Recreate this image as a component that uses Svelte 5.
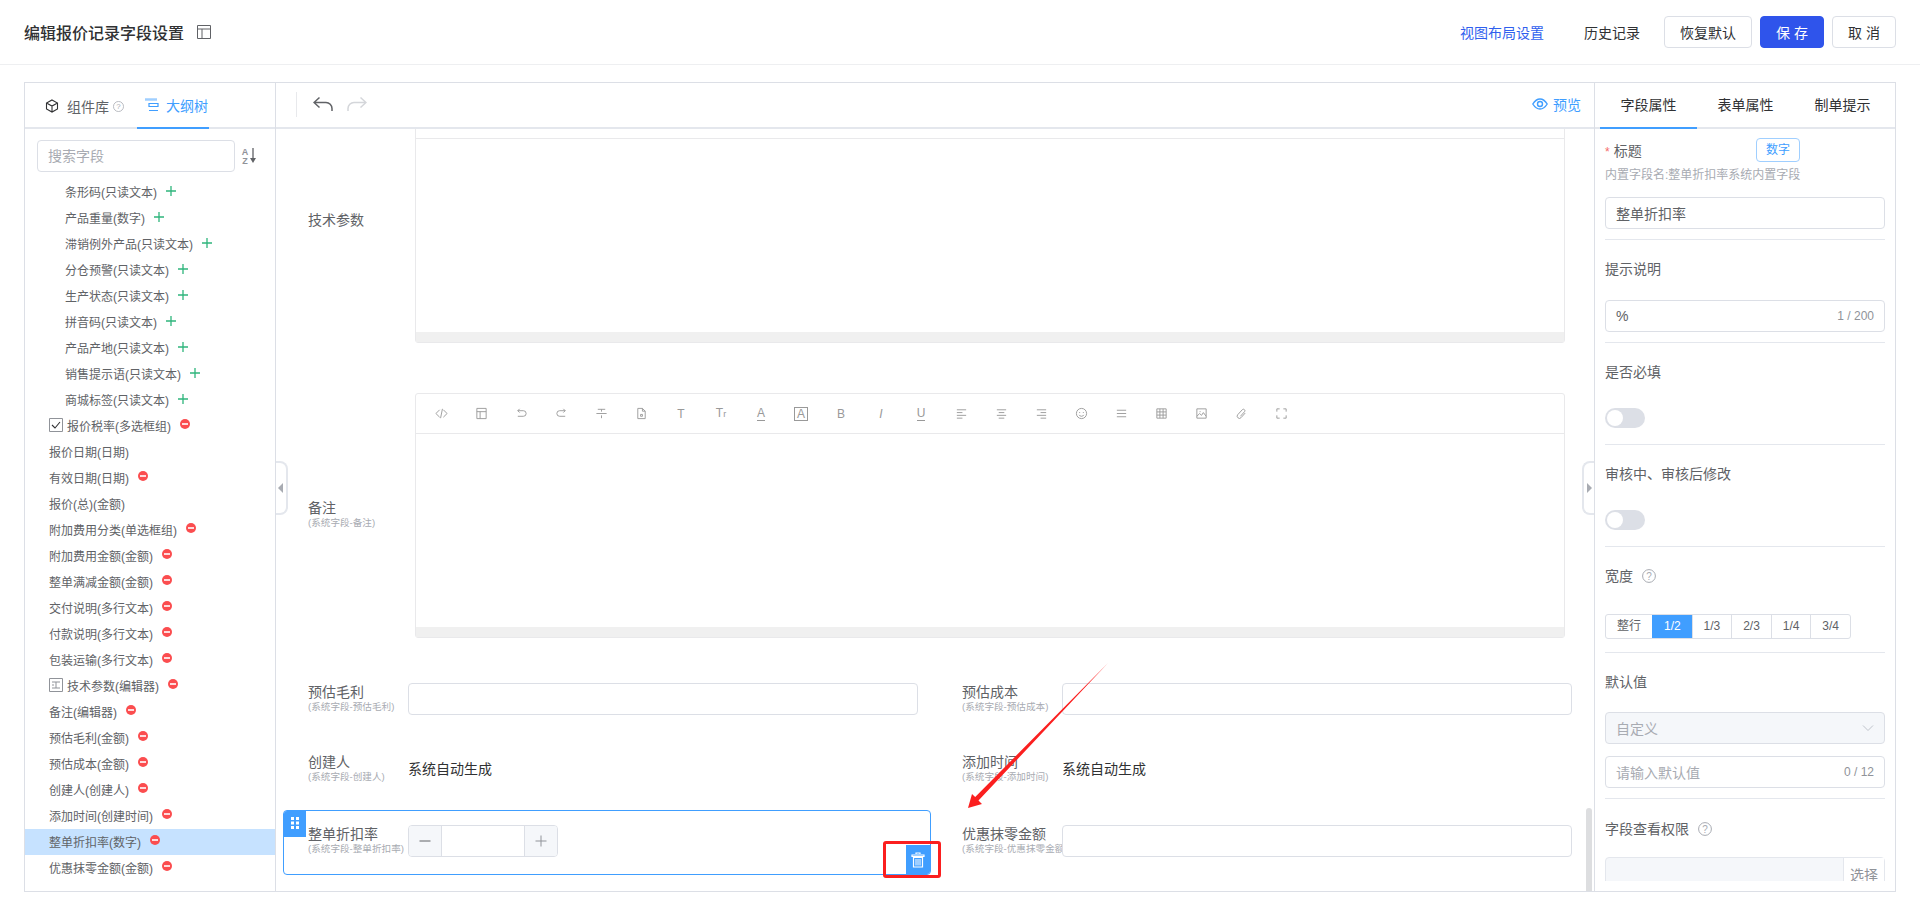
<script>
  const fields = [
    { name: '条形码(只读文本)', sub: true, mark: 'plus' },
    { name: '产品重量(数字)', sub: true, mark: 'plus' },
    { name: '滞销例外产品(只读文本)', sub: true, mark: 'plus' },
    { name: '分仓预警(只读文本)', sub: true, mark: 'plus' },
    { name: '生产状态(只读文本)', sub: true, mark: 'plus' },
    { name: '拼音码(只读文本)', sub: true, mark: 'plus' },
    { name: '产品产地(只读文本)', sub: true, mark: 'plus' },
    { name: '销售提示语(只读文本)', sub: true, mark: 'plus' },
    { name: '商城标签(只读文本)', sub: true, mark: 'plus' },
    { name: '报价税率(多选框组)', lead: 'check', mark: 'minus' },
    { name: '报价日期(日期)' },
    { name: '有效日期(日期)', mark: 'minus' },
    { name: '报价(总)(金额)' },
    { name: '附加费用分类(单选框组)', mark: 'minus' },
    { name: '附加费用金额(金额)', mark: 'minus' },
    { name: '整单满减金额(金额)', mark: 'minus' },
    { name: '交付说明(多行文本)', mark: 'minus' },
    { name: '付款说明(多行文本)', mark: 'minus' },
    { name: '包装运输(多行文本)', mark: 'minus' },
    { name: '技术参数(编辑器)', lead: 'editor', mark: 'minus' },
    { name: '备注(编辑器)', mark: 'minus' },
    { name: '预估毛利(金额)', mark: 'minus' },
    { name: '预估成本(金额)', mark: 'minus' },
    { name: '创建人(创建人)', mark: 'minus' },
    { name: '添加时间(创建时间)', mark: 'minus' },
    { name: '整单折扣率(数字)', mark: 'minus', active: true },
    { name: '优惠抹零金额(金额)', mark: 'minus' }
  ];

  const tools = [
    { d: 'M5 3 1 7l4 4M9 3l4 4-4 4M8 2 6 12' },
    { d: 'M2 1.5h10v11H2zM2 5h10M5.5 5v7.5' },
    { d: 'M3 4h6a3 3 0 0 1 0 6H3M5 2 3 4l2 2' },
    { d: 'M11 4H5a3 3 0 0 0 0 6h6M9 2l2 2-2 2' },
    { d: 'M3 2.5h8M7 2.5V5M1.5 7h11M7 9v3' },
    { d: 'M3 1.5h5l3 3v8H3zM8 1.5v3h3M6 8h2v2H6z' },
    { t: 'T' },
    { t: 'T', small: 'r' },
    { t: 'A', cls: 'under' },
    { t: 'A', cls: 'boxed' },
    { t: 'B' },
    { t: 'I', cls: 'ital' },
    { t: 'U', cls: 'under' },
    { d: 'M2 3h10M2 6h6M2 9h10M2 12h6' },
    { d: 'M2 3h10M4 6h6M2 9h10M4 12h6' },
    { d: 'M2 3h10M6 6h6M2 9h10M6 12h6' },
    { d: 'M7 1.5a5.5 5.5 0 1 0 0 11 5.5 5.5 0 0 0 0-11zM5 5.5v1M9 5.5v1M4.5 8.5c1 2 4 2 5 0' },
    { d: 'M2 3.5h10M2 7h10M2 10.5h10' },
    { d: 'M2 2h10v10H2zM2 5.3h10M2 8.7h10M5.3 2v10M8.7 2v10' },
    { d: 'M2 2h10v10H2zM2 10l3-3 2 2 2-3 3 4M5 5h1' },
    { d: 'M11 6.5 6.5 11.5a2.4 2.4 0 0 1-3.5-3.3l5-5.4a1.6 1.6 0 0 1 2.3 2.2L5.800 10' },
    { d: 'M2 5V2h3M9 2h3v3M12 9v3H9M5 12H2V9' }
  ];

  const widths = ['整行', '1/2', '1/3', '2/3', '1/4', '3/4'];
</script>

{#snippet help()}
  <svg class="help" viewBox="0 0 14 14" width="14" height="14">
    <circle cx="7" cy="7" r="6.400" fill="none" stroke="#a8abb2" />
    <text x="7" y="10.500" text-anchor="middle" font-size="10" fill="#a8abb2">?</text>
  </svg>
{/snippet}

{#snippet editor(list)}
  <div class="editor">
    <div class="editor-tools">
      {#each list as tool}
        <span class="tool">
          {#if tool.d}
            <svg viewBox="0 0 14 14" width="13" height="13"><path d={tool.d} /></svg>
          {:else}
            <span class={tool.cls}>{tool.t}{#if tool.small}<small>{tool.small}</small>{/if}</span>
          {/if}
        </span>
      {/each}
    </div>
    <div class="editor-body"></div>
    <div class="editor-foot"></div>
  </div>
{/snippet}

<div class="page">
  <header class="top">
    <h1>编辑报价记录字段设置</h1>
    <svg class="layout-ic" viewBox="0 0 14 14" width="14" height="14">
      <path d="M.5.5h13v13H.5zM.5 4h13M5 4v9.500" fill="none" stroke="#606266" />
    </svg>
    <div class="top-actions">
      <a class="link" href="#top">视图布局设置</a>
      <span class="history">历史记录</span>
      <button class="btn wide">恢复默认</button>
      <button class="btn primary">保 存</button>
      <button class="btn">取 消</button>
    </div>
  </header>

  <main class="panel">
    <aside class="outline">
      <div class="tabs left-tabs">
        <div class="tab-lib">
          <svg viewBox="0 0 14 14" width="14" height="14">
            <path d="M7 1 12.500 4v6L7 13 1.500 10V4zM1.500 4 7 7l5.500-3M7 7v6" fill="none" stroke="#303133" stroke-width="1.100" />
          </svg>
          <span>组件库</span>
          {@render help()}
        </div>
        <div class="tab-tree">
          <svg viewBox="0 0 14 14" width="14" height="14">
            <path d="M0 1.500h12" stroke="#a0cfff" stroke-width="2.500" fill="none" />
            <path d="M4 5.500h9v3H4zM4 12.500h9" stroke="#409eff" stroke-width="1.200" fill="none" />
          </svg>
          <span>大纲树</span>
        </div>
      </div>
      <div class="search-row">
        <div class="search">搜索字段</div>
        <svg class="sort" viewBox="0 0 16 18" width="16" height="18">
          <text x="4" y="8" font-size="9" font-weight="700" text-anchor="middle" fill="#909399">A</text>
          <text x="4" y="16.500" font-size="9" font-weight="700" text-anchor="middle" fill="#909399">Z</text>
          <path d="M12 1v11" stroke="#606266" stroke-width="1.300" />
          <path d="M9 11h6l-3 5z" fill="#606266" />
        </svg>
      </div>
      <ul class="tree">
        {#each fields as f}
          <li class:sub={f.sub} class:active={f.active}>
            {#if f.lead === 'check'}
              <svg class="lead" viewBox="0 0 14 14" width="14" height="14">
                <path d="M.5.5h13v13H.5z" fill="#fff" stroke="#909399" />
                <path d="M3 7l3 3 5-6" fill="none" stroke="#303133" stroke-width="1.100" />
              </svg>
            {:else if f.lead === 'editor'}
              <svg class="lead" viewBox="0 0 14 14" width="14" height="14">
                <path d="M.5.5h13v13H.5zM3 4h8M7 4v6M3 7h2M3 10h8" fill="none" stroke="#909399" />
              </svg>
            {/if}
            <span>{f.name}</span>
            {#if f.mark === 'plus'}
              <svg class="plus" viewBox="0 0 10 10" width="10" height="10">
                <path d="M5 0v10M0 5h10" stroke="#2fb57c" stroke-width="1.300" />
              </svg>
            {:else if f.mark === 'minus'}
              <svg class="minus" viewBox="0 0 10 10" width="10" height="10">
                <circle cx="5" cy="5" r="5" fill="#fb4d4f" />
                <path d="M2 5h6" stroke="#fff" stroke-width="1.600" />
              </svg>
            {/if}
          </li>
        {/each}
      </ul>
    </aside>

    <section class="stage">
      <div class="stage-bar">
        <span class="sep"></span>
        <svg class="undo" viewBox="0 0 20 16" width="20" height="16">
          <path d="M6.500 1.500 1 6.500l5.500 5M1 6.500h12a6 6 0 0 1 6 6v2.500" fill="none" stroke="#606266" stroke-width="1.500" />
        </svg>
        <svg class="redo" viewBox="0 0 20 16" width="20" height="16">
          <path d="M13.500 1.500 19 6.500l-5.500 5M19 6.500H7a6 6 0 0 0-6 6v2.500" fill="none" stroke="#d4d6da" stroke-width="1.500" />
        </svg>
        <span class="preview">
          <svg viewBox="0 0 16 12" width="16" height="12">
            <path d="M.8 6C3 2.500 5.300 1 8 1s5 1.500 7.200 5C13 9.500 10.700 11 8 11S3 9.500.8 6z" fill="none" stroke="#409eff" stroke-width="1.400" />
            <circle cx="8" cy="6" r="2.500" fill="none" stroke="#409eff" stroke-width="1.400" />
          </svg>
          预览
        </span>
      </div>
      <div class="canvas">
        <div class="canvas-inner">
          <div class="row">
            <div class="label"><b>技术参数</b></div>
            {@render editor([])}
          </div>
          <div class="row next-editor">
            <div class="label"><b>备注</b><small>(系统字段-备注)</small></div>
            {@render editor(tools)}
          </div>
          <div class="grid first-grid">
            <div class="field">
              <div class="label"><b>预估毛利</b><small>(系统字段-预估毛利)</small></div>
              <div class="input"></div>
            </div>
            <div class="field">
              <div class="label"><b>预估成本</b><small>(系统字段-预估成本)</small></div>
              <div class="input"></div>
            </div>
          </div>
          <div class="grid auto-grid">
            <div class="field">
              <div class="label"><b>创建人</b><small>(系统字段-创建人)</small></div>
              <div class="auto">系统自动生成</div>
            </div>
            <div class="field">
              <div class="label"><b>添加时间</b><small>(系统字段-添加时间)</small></div>
              <div class="auto">系统自动生成</div>
            </div>
          </div>
          <div class="grid last-grid">
            <div class="field selected">
              <span class="drag">
                <svg viewBox="0 0 10 14" width="10" height="14">
                  <path d="M1 1h3v3H1zM6 1h3v3H6zM1 5.500h3v3H1zM6 5.500h3v3H6zM1 10h3v3H1zM6 10h3v3H6z" fill="#fff" />
                </svg>
              </span>
              <div class="label"><b>整单折扣率</b><small>(系统字段-整单折扣率)</small></div>
              <div class="stepper">
                <span class="step"><svg viewBox="0 0 12 12" width="12" height="12"><path d="M.5 6h11" stroke="#606266" /></svg></span>
                <span class="step-mid"></span>
                <span class="step"><svg viewBox="0 0 12 12" width="12" height="12"><path d="M.5 6h11M6 .5v11" stroke="#909399" /></svg></span>
              </div>
              <span class="trash">
                <svg viewBox="0 0 14 16" width="14" height="16">
                  <path d="M5 2V1h4v1M1 3h12v1.500H1zM2.500 5.500h9V15h-9z" fill="none" stroke="#fff" stroke-width="1.200" />
                  <path d="M5 7v6.500M7 7v6.500M9 7v6.500" stroke="#fff" />
                </svg>
              </span>
              <span class="mark-box"></span>
            </div>
            <div class="field tight">
              <div class="label"><b>优惠抹零金额</b><small>(系统字段-优惠抹零金额)</small></div>
              <div class="input"></div>
            </div>
          </div>
        </div>
        <span class="scroll-thumb"></span>
        <span class="handle handle-left"><i></i></span>
        <span class="handle handle-right"><i></i></span>
        <svg class="arrow" viewBox="0 0 150 155" width="150" height="155">
          <polygon points="145,0 15.500,137.500 19,141 5,145 9,131 12.200,134" fill="#fb1f1f" />
        </svg>
      </div>
    </section>

    <aside class="props">
      <div class="tabs right-tabs">
        <span class="on">字段属性</span>
        <span>表单属性</span>
        <span>制单提示</span>
      </div>
      <div class="props-body">
        <div class="group first">
          <div class="head-row">
            <span class="req"><em>*</em>标题</span>
            <span class="tag">数字</span>
          </div>
          <p class="hint">内置字段名:整单折扣率系统内置字段</p>
          <div class="input value gap-14">整单折扣率</div>
        </div>
        <div class="group">
          <div class="title">提示说明</div>
          <div class="input value gap-21">%<span class="count">1 / 200</span></div>
        </div>
        <div class="group tall">
          <div class="title">是否必填</div>
          <span class="toggle"></span>
        </div>
        <div class="group tall">
          <div class="title">审核中、审核后修改</div>
          <span class="toggle"></span>
        </div>
        <div class="group seg-group">
          <div class="title">宽度 {@render help()}</div>
          <div class="seg">
            {#each widths as w, i}
              <span class:on={i === 1}>{w}</span>
            {/each}
          </div>
        </div>
        <div class="group">
          <div class="title">默认值</div>
          <div class="input disabled gap-20">
            自定义
            <svg viewBox="0 0 12 8" width="12" height="8"><path d="M1 1.500 6 6.500l5-5" fill="none" stroke="#c0c4cc" /></svg>
          </div>
          <div class="input holder gap-12">请输入默认值<span class="count">0 / 12</span></div>
        </div>
        <div class="group last">
          <div class="title">字段查看权限 {@render help()}</div>
          <div class="picker"><span>选择</span></div>
        </div>
      </div>
    </aside>
  </main>
</div>

<style>
  :global(body) {
    margin: 0;
    background: #fff;
    overflow: hidden;
  }
  .page {
    width: 1920px;
    height: 916px;
    overflow: hidden;
    font-family: "Liberation Sans", "Noto Sans CJK SC", sans-serif;
    font-size: 14px;
    color: #606266;
  }

  /* top bar */
  .top {
    display: flex;
    align-items: center;
    height: 64px;
    padding: 0 24px;
    border-bottom: 1px solid #eeeff1;
  }
  h1 {
    margin: 0;
    font-size: 16px;
    font-weight: 500;
    color: #303133;
  }
  .layout-ic {
    margin-left: 13px;
  }
  .top-actions {
    display: flex;
    align-items: center;
    margin-left: auto;
  }
  .link {
    color: #2f5fee;
    text-decoration: none;
  }
  .history {
    margin: 0 24px 0 40px;
    color: #303133;
  }
  .btn {
    width: 64px;
    height: 32px;
    margin-left: 8px;
    padding: 0;
    border: 1px solid #dcdfe6;
    border-radius: 4px;
    background: #fff;
    font: inherit;
    color: #303133;
  }
  .btn.wide {
    width: 88px;
    margin-left: 0;
  }
  .btn.primary {
    background: #2f54eb;
    border-color: #2f54eb;
    color: #fff;
  }

  /* main frame */
  .panel {
    display: flex;
    width: 1872px;
    height: 810px;
    margin: 17px 24px 0;
    box-sizing: border-box;
    border: 1px solid #dcdfe6;
  }
  .tabs {
    display: flex;
    height: 46px;
    box-sizing: border-box;
    border-bottom: 2px solid #e4e7ed;
    flex: none;
  }

  /* left tree */
  .outline {
    display: flex;
    flex-direction: column;
    width: 251px;
    box-sizing: border-box;
    border-right: 1px solid #dcdfe6;
  }
  .left-tabs {
    padding-left: 20px;
  }
  .tab-lib {
    display: flex;
    align-items: center;
    width: 92px;
    height: 46px;
    color: #606266;
  }
  .tab-lib span {
    margin: 0 4px 0 8px;
  }
  .tab-lib .help {
    width: 11px;
    height: 11px;
  }
  .tab-tree {
    display: flex;
    align-items: center;
    gap: 7px;
    width: 72px;
    height: 46px;
    box-sizing: border-box;
    padding-left: 8px;
    border-bottom: 2px solid #409eff;
    color: #409eff;
  }
  .search-row {
    display: flex;
    align-items: center;
    padding: 11px 0 0 12px;
  }
  .search {
    width: 198px;
    height: 32px;
    box-sizing: border-box;
    padding-left: 10px;
    border: 1px solid #dcdfe6;
    border-radius: 4px;
    line-height: 30px;
    color: #a8abb2;
  }
  .sort {
    margin-left: 6px;
  }
  .tree {
    margin: 7px 0 0;
    padding: 0;
    list-style: none;
    font-size: 12px;
  }
  .tree li {
    display: flex;
    align-items: center;
    height: 26px;
    box-sizing: border-box;
    padding: 0 0 2px 24px;
  }
  .tree li.sub {
    padding-left: 40px;
  }
  .tree li.active {
    background: #c6e2ff;
  }
  .lead {
    margin-right: 4px;
  }
  .plus {
    margin-left: 9px;
  }
  .minus {
    margin: -2px 0 0 9px;
  }

  /* centre */
  .stage {
    display: flex;
    flex-direction: column;
    width: 1318px;
    min-width: 0;
  }
  .stage-bar {
    display: flex;
    align-items: center;
    height: 46px;
    flex: none;
    box-sizing: border-box;
    padding: 0 13px 2px 20px;
    border-bottom: 2px solid #e4e7ed;
  }
  .sep {
    width: 1px;
    height: 25px;
    background: #e8e9ec;
  }
  .undo {
    margin-left: 16px;
  }
  .redo {
    margin-left: 14px;
  }
  .preview {
    display: flex;
    align-items: center;
    gap: 5px;
    margin-left: auto;
    color: #409eff;
  }
  .canvas {
    position: relative;
    flex: 1;
    overflow: hidden;
  }
  .canvas-inner {
    margin-top: -31px;
    padding-left: 7px;
  }
  .row {
    display: flex;
    align-items: center;
    padding-left: 25px;
  }
  .next-editor {
    margin-top: 50px;
  }
  .label {
    display: flex;
    flex-direction: column;
    width: 100px;
    box-sizing: border-box;
    padding-bottom: 2px;
    flex: none;
    overflow: hidden;
    white-space: nowrap;
  }
  .label b {
    font-weight: 400;
    line-height: 16px;
  }
  .label small {
    font-size: 9.600px;
    line-height: 13px;
    color: #a8abb2;
  }
  .editor {
    display: flex;
    flex-direction: column;
    width: 1150px;
    height: 245px;
    margin-left: 7px;
    box-sizing: border-box;
    border: 1px solid #e9e9eb;
    border-radius: 3px;
  }
  .editor-tools {
    display: flex;
    align-items: center;
    height: 40px;
    flex: none;
    box-sizing: border-box;
    padding: 0 5px;
    border-bottom: 1px solid #e9e9eb;
  }
  .tool {
    display: flex;
    align-items: center;
    justify-content: center;
    width: 40px;
    font-family: "Liberation Sans", sans-serif;
    font-size: 12px;
    line-height: 14px;
    color: #999;
  }
  .tool svg path {
    fill: none;
    stroke: #999;
  }
  .tool small {
    font-size: 9px;
  }
  .tool .under {
    border-bottom: 1px solid #999;
  }
  .tool .boxed {
    padding: 0 2px;
    border: 1px solid #999;
    line-height: 12px;
  }
  .tool .ital {
    font-style: italic;
  }
  .editor-body {
    flex: 1;
  }
  .editor-foot {
    height: 10px;
    background: #f0f0f0;
  }
  .grid {
    display: grid;
    grid-template-columns: 648px 648px;
    gap: 6px;
  }
  .first-grid {
    margin-top: 45px;
  }
  .auto-grid {
    margin-top: 38px;
  }
  .last-grid {
    margin-top: 25px;
  }
  .field {
    position: relative;
    display: flex;
    align-items: center;
    padding: 0 13px 0 25px;
  }
  .field .input {
    flex: 1;
    min-width: 0;
  }
  .tight {
    align-items: flex-start;
    padding-top: 15px;
    padding-bottom: 18px;
  }
  .tight .label {
    padding-top: 1px;
  }
  .input {
    position: relative;
    height: 32px;
    box-sizing: border-box;
    border: 1px solid #dcdfe6;
    border-radius: 4px;
    background: #fff;
  }
  .auto {
    line-height: 32px;
    font-size: 14px;
    color: #303133;
  }
  .selected {
    align-items: flex-start;
    padding-top: 14px;
    padding-bottom: 17px;
    border: 1px solid #409eff;
    border-radius: 4px;
    margin: 0;
    box-sizing: border-box;
    padding-left: 24px;
    padding-right: 12px;
  }
  .selected .label {
    padding-top: 1px;
  }
  .drag {
    position: absolute;
    top: 0;
    left: 0;
    display: flex;
    justify-content: center;
    padding-top: 5px;
    width: 22px;
    height: 21px;
    background: #409eff;
    border-radius: 3px 0 0 0;
  }
  .stepper {
    display: flex;
    width: 150px;
    height: 32px;
    box-sizing: border-box;
    border: 1px solid #dcdfe6;
    border-radius: 4px;
  }
  .step {
    display: flex;
    align-items: center;
    justify-content: center;
    width: 32px;
    background: #f5f7fa;
    border-radius: 3px 0 0 3px;
  }
  .step:last-child {
    border-radius: 0 3px 3px 0;
  }
  .step-mid {
    flex: 1;
    border-left: 1px solid #dcdfe6;
    border-right: 1px solid #dcdfe6;
  }
  .trash {
    position: absolute;
    right: 0;
    bottom: 0;
    display: flex;
    align-items: center;
    justify-content: center;
    width: 24px;
    height: 29px;
    background: #409eff;
    border-radius: 0 0 3px 0;
  }
  .mark-box {
    position: absolute;
    right: -11px;
    bottom: -4px;
    width: 58px;
    height: 37px;
    box-sizing: border-box;
    border: 3px solid #fb1f1f;
    border-radius: 3px;
  }
  .scroll-thumb {
    position: absolute;
    top: 679px;
    right: 2px;
    width: 6px;
    height: 90px;
    background: #dddee0;
    border-radius: 3px 3px 0 0;
  }
  .handle {
    position: absolute;
    top: 332px;
    width: 10px;
    height: 50px;
    border: 2px solid #e4e7ed;
    background: #fff;
  }
  .handle-left {
    left: 0;
    border-left: 0;
    border-radius: 0 8px 8px 0;
  }
  .handle-right {
    right: 0;
    border-right: 0;
    border-radius: 8px 0 0 8px;
  }
  .handle i {
    position: absolute;
    top: 20px;
    border: 5px solid transparent;
  }
  .handle-left i {
    left: -3px;
    border-right-color: #a8abb2;
  }
  .handle-right i {
    left: 3px;
    border-left-color: #a8abb2;
  }
  .arrow {
    position: absolute;
    left: 687px;
    top: 534px;
  }

  /* right props */
  .props {
    display: flex;
    flex-direction: column;
    width: 301px;
    box-sizing: border-box;
    padding-bottom: 10px;
    border-left: 1px solid #dcdfe6;
  }
  .right-tabs {
    padding-left: 5px;
  }
  .right-tabs span {
    width: 97px;
    height: 46px;
    box-sizing: border-box;
    text-align: center;
    line-height: 44px;
    color: #303133;
  }
  .right-tabs .on {
    border-bottom: 2px solid #409eff;
  }
  .props-body {
    flex: 1;
    overflow: hidden;
    padding: 0 10px;
  }
  .group {
    padding: 19px 0 10px;
    border-bottom: 1px solid #e4e7ed;
  }
  .group.first {
    padding-top: 9px;
  }
  .group.tall {
    padding-bottom: 16px;
  }
  .group.seg-group {
    padding-bottom: 13px;
  }
  .group.last {
    padding-top: 20px;
    border-bottom: 0;
  }
  .head-row {
    display: flex;
    align-items: center;
    justify-content: space-between;
    width: 195px;
    height: 24px;
  }
  .req {
    padding-bottom: 1px;
  }
  .req em {
    font-style: normal;
    font-size: 12px;
    color: #f56c6c;
    margin-right: 4px;
  }
  .tag {
    width: 44px;
    height: 24px;
    box-sizing: border-box;
    border: 1px solid #a0cfff;
    border-radius: 4px;
    text-align: center;
    line-height: 22px;
    font-size: 12px;
    color: #409eff;
  }
  .hint {
    margin: 5px 0 0;
    font-size: 12px;
    line-height: 16px;
    color: #a8abb2;
  }
  .title {
    display: flex;
    align-items: center;
    gap: 9px;
    height: 20px;
    box-sizing: border-box;
    padding-bottom: 2px;
  }
  .title .help {
    margin-top: 2px;
  }
  .value,
  .holder,
  .disabled {
    display: flex;
    align-items: center;
    padding: 0 10px;
  }
  .holder {
    color: #a8abb2;
  }
  .disabled {
    justify-content: space-between;
    background: #f5f7fa;
    color: #a8abb2;
  }
  .count {
    margin-left: auto;
    font-size: 12px;
    color: #909399;
  }
  .gap-14 {
    margin-top: 14px;
  }
  .gap-21 {
    margin-top: 21px;
  }
  .gap-20 {
    margin-top: 20px;
  }
  .gap-12 {
    margin-top: 12px;
  }
  .toggle {
    position: relative;
    display: block;
    width: 40px;
    height: 20px;
    margin-top: 26px;
    background: #dcdfe6;
    border-radius: 10px;
  }
  .toggle::after {
    content: "";
    position: absolute;
    top: 2px;
    left: 2px;
    width: 16px;
    height: 16px;
    background: #fff;
    border-radius: 50%;
  }
  .seg {
    display: flex;
    width: 246px;
    height: 25px;
    margin-top: 28px;
    box-sizing: border-box;
    border: 1px solid #dcdfe6;
    border-radius: 3px;
    font-size: 12px;
  }
  .seg span {
    flex: 1;
    text-align: center;
    line-height: 23px;
    border-left: 1px solid #dcdfe6;
  }
  .seg span:first-child {
    flex: 0 0 46px;
    border-left: 0;
  }
  .seg .on {
    background: #409eff;
    border-color: #409eff;
    color: #fff;
  }
  .picker {
    display: flex;
    justify-content: flex-end;
    height: 40px;
    margin-top: 18px;
    box-sizing: border-box;
    border: 1px solid #e4e7ed;
    border-radius: 4px;
    background: #f5f7fa;
  }
  .picker span {
    width: 40px;
    padding-top: 6px;
    text-align: center;
    background: #fff;
    border-left: 1px solid #e4e7ed;
    color: #909399;
  }
</style>
